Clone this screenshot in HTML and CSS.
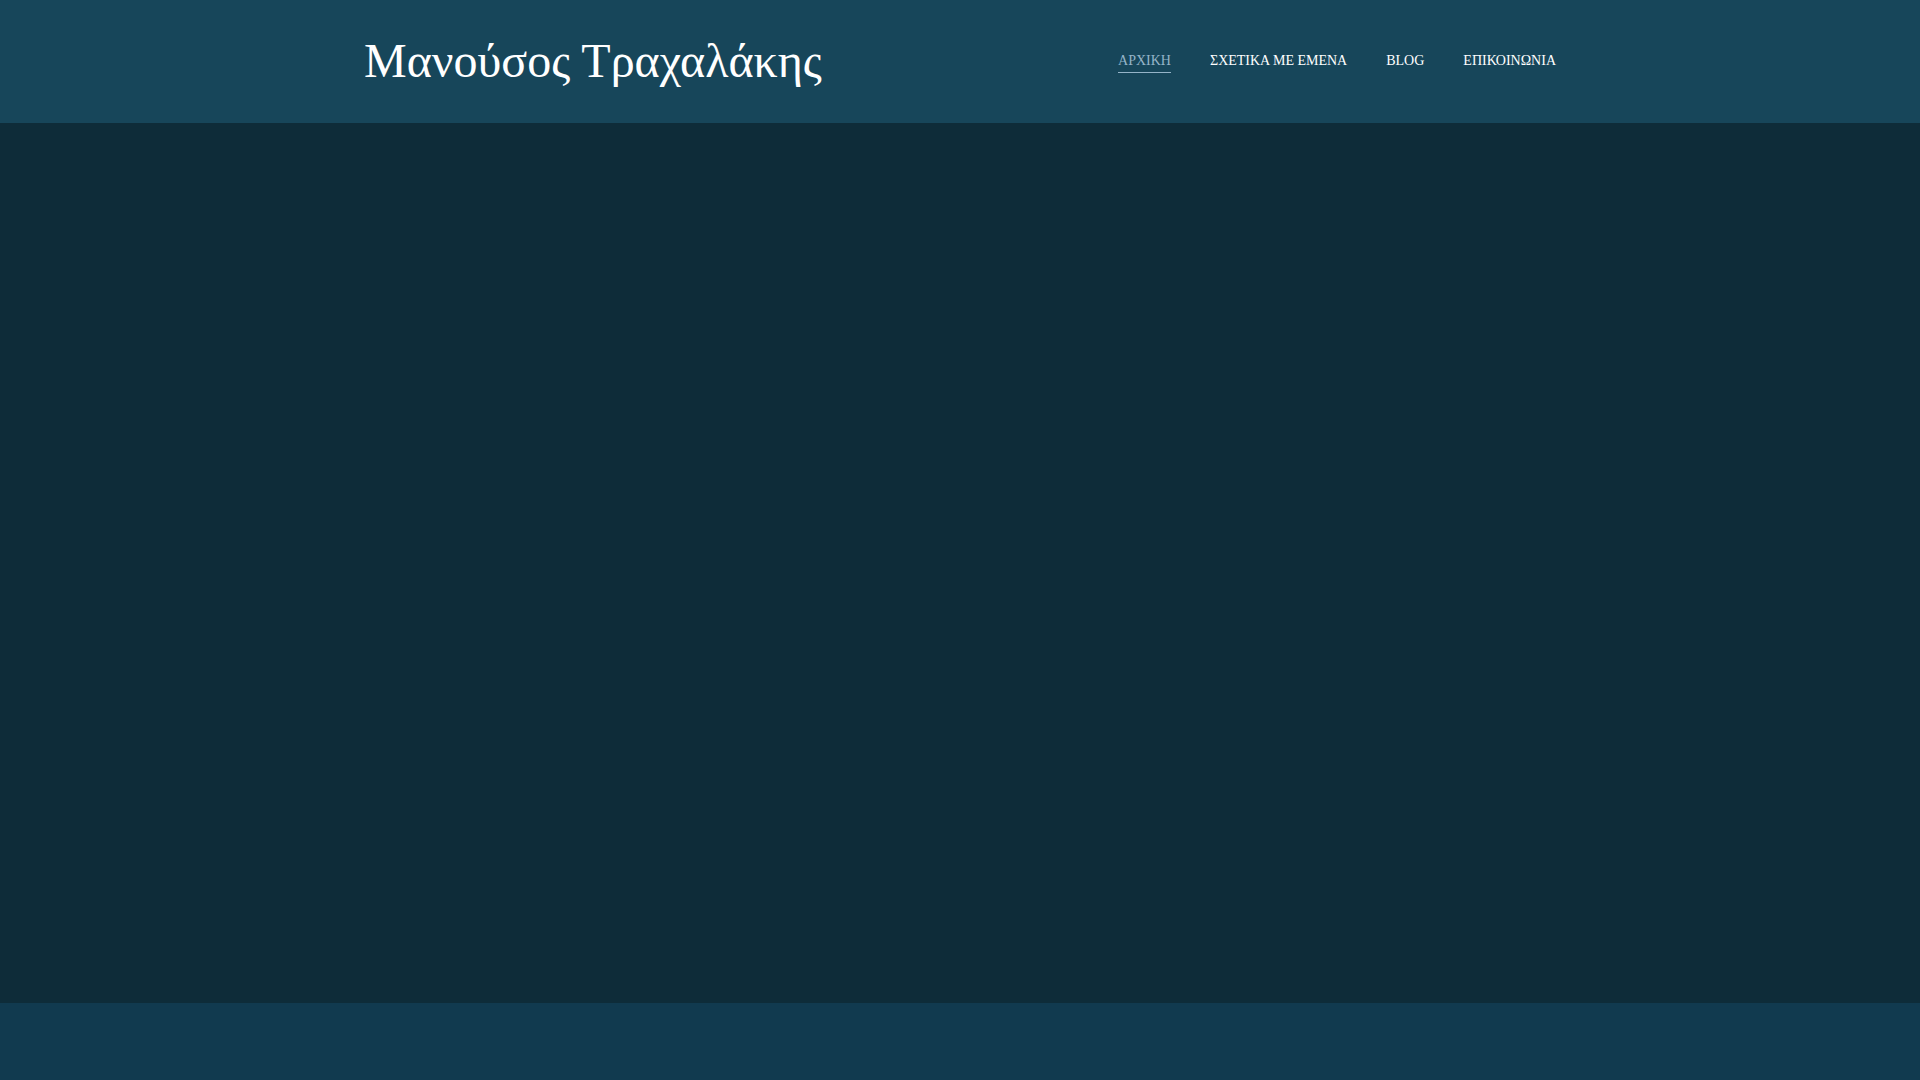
FILE: index.html
```html
<!DOCTYPE html>
<html lang="el">
<head>
<meta charset="utf-8">
<title>Μανούσος Τραχαλάκης</title>
<link rel="stylesheet" href="styles.css">
</head>
<body>
<header class="site-header">
  <div class="container header-inner">
    <a class="brand" href="#">Μανούσος Τραχαλάκης</a>
    <nav class="nav">
      <a class="nav-link active" href="#">ΑΡΧΙΚΗ</a>
      <a class="nav-link" href="#">ΣΧΕΤΙΚΑ ΜΕ ΕΜΕΝΑ</a>
      <a class="nav-link" href="#">BLOG</a>
      <a class="nav-link" href="#">ΕΠΙΚΟΙΝΩΝΙΑ</a>
    </nav>
  </div>
</header>
<main class="site-main"></main>
<footer class="site-footer"></footer>
</body>
</html>
```
FILE: styles.css
```css
html, body {
  margin: 0;
  padding: 0;
}
body {
  font-family: "Liberation Serif", "Times New Roman", serif;
  background: #0e2c39;
  color: #ffffff;
  display: flex;
  flex-direction: column;
  min-height: 100vh;
}
.site-header {
  background: #17465a;
  height: 123px;
}
.container {
  width: 1192px;
  margin: 0 auto;
}
.header-inner {
  display: flex;
  justify-content: space-between;
  align-items: flex-start;
  height: 100%;
}
.brand {
  color: #ffffff;
  text-decoration: none;
  font-size: 48px;
  line-height: 1;
  margin-top: 37px;
}
.nav {
  display: flex;
  gap: 39px;
  margin-top: 53px;
}
.nav-link {
  color: #ffffff;
  text-decoration: none;
  font-size: 14px;
  line-height: 16px;
  padding-bottom: 3px;
  border-bottom: 1px solid transparent;
}
.nav-link.active {
  color: #95b4c8;
  border-bottom-color: #95b4c8;
}
.site-main {
  flex: 1;
  background: #0e2c39;
}
.site-footer {
  background: #113a4f;
  height: 77px;
}
```
